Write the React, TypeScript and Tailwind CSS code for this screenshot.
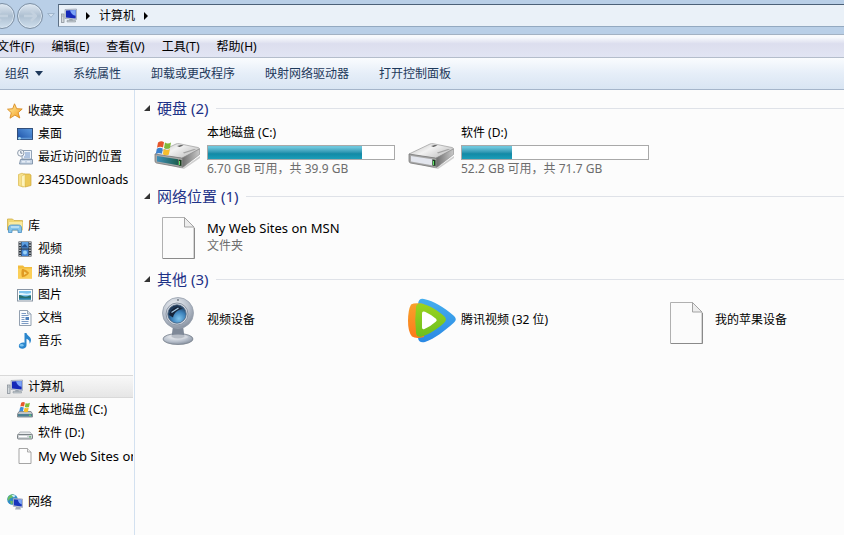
import React from 'react';
import clsx from 'clsx';

const ComputerIcon = () => (
    <svg viewBox="0 0 16 16" className="w-4 h-4 shrink-0" aria-hidden="true">
        <rect x="0.5" y="6" width="2.5" height="8.5" fill="#d5dade" stroke="#7f8890" strokeWidth="0.7" />
        <path d="M1 8h1.500" stroke="#8a939b" strokeWidth="0.7" />
        <path d="M4 1.500l11.500-.5v10.500L4 10.500z" fill="#c9d0dc" stroke="#8c96a8" strokeWidth="0.6" />
        <path d="M5 2.400l9.700-.4v8.400L5 9.500z" fill="#1428b8" />
        <path d="M9 2.200l5.700-.2v5.700c-3-.2-5-2.500-5.700-5.500z" fill="#7ba3f7" />
        <path d="M8.500 11h3l.5 1.500H8z" fill="#99a3ad" />
        <path d="M6 12.500h8.500V14H6z" fill="#c3cad1" stroke="#838c94" strokeWidth="0.5" />
    </svg>
);

const StarIcon = () => (
    <svg viewBox="0 0 16 16" className="w-4 h-4 shrink-0" aria-hidden="true">
        <defs>
            <linearGradient id="star" x1="0" y1="0" x2="1" y2="1">
                <stop offset="0" stopColor="#fff3a8" />
                <stop offset="1" stopColor="#f59a1c" />
            </linearGradient>
        </defs>
        <path d="M7.500.8l2.200 4.900 5.500.3-4.100 3.700 1.700 5.300-4.900-2.900L3 15.200l1.300-5.500L.5 6.200l5.200-.5z" fill="url(#star)" stroke="#d98a1f" strokeWidth="0.9" strokeLinejoin="round" />
    </svg>
);

const DesktopIcon = () => (
    <svg viewBox="0 0 16 16" className="w-4 h-4 shrink-0" aria-hidden="true">
        <defs>
            <linearGradient id="desk" x1="0" y1="1" x2="1" y2="0">
                <stop offset="0" stopColor="#1c4fa5" />
                <stop offset="1" stopColor="#5b9be0" />
            </linearGradient>
        </defs>
        <rect x="0.500" y="2.500" width="15" height="11" fill="url(#desk)" stroke="#27446f" strokeWidth="0.9" />
        <path d="M1 11.700h14v1.500H1z" fill="#5f97d6" />
        <circle cx="2.500" cy="12.200" r="1.300" fill="#a5dcf2" />
    </svg>
);

const RecentIcon = () => (
    <svg viewBox="0 0 16 16" className="w-4 h-4 shrink-0" aria-hidden="true">
        <path d="M5 1.500h9.500V10H5z" fill="#eef4fb" stroke="#8798ae" strokeWidth="0.9" />
        <path d="M3.500 10.500h12v4.500H2.500z" fill="#c5d3e4" stroke="#7c8ea6" strokeWidth="0.9" />
        <path d="M8 4h5M8 6h5M7 8h6" stroke="#5f87bd" strokeWidth="0.9" />
        <path d="M5 12.800h3M10 12.800h3" stroke="#f4f8fc" strokeWidth="1" />
        <circle cx="3.800" cy="4" r="3.200" fill="#f5f8fb" stroke="#8492a3" strokeWidth="0.9" />
        <path d="M3.800 2v2.200h1.600" fill="none" stroke="#52677f" strokeWidth="0.8" />
    </svg>
);

const FolderIcon = () => (
    <svg viewBox="0 0 16 16" className="w-4 h-4 shrink-0" aria-hidden="true">
        <path d="M1.500 2.500L5 1.200l3.500 1.300v11.800L6 15l-4.500-1.500z" fill="#f7e08a" stroke="#d9b74b" strokeWidth="0.7" />
        <path d="M7 2h5.500l1.500 1v10.500L8 15z" fill="#ecc957" stroke="#cfa83c" strokeWidth="0.7" />
        <path d="M4.500 4L8 2.500V15l-3.500-1.200z" fill="#fdf3bd" stroke="#dfc05b" strokeWidth="0.5" />
    </svg>
);

const LibraryIcon = () => (
    <svg viewBox="0 0 16 16" className="w-4 h-4 shrink-0" aria-hidden="true">
        <path d="M.5 1h5L7 2.500h8.500V12H.5z" fill="#f1d772" stroke="#cfae49" strokeWidth="0.8" />
        <path d="M2 4h13.500v8H2z" fill="#f9eaa0" />
        <path d="M1.500 14.500V10c0-2 1.200-3 3-3h7c1.800 0 3 1 3 3v4.500h-3.500V12H5v2.500z" fill="#85c4ea" stroke="#4b8fc4" strokeWidth="0.8" />
        <path d="M4 9h8" stroke="#d8effb" strokeWidth="1.200" />
    </svg>
);

const VideoIcon = () => (
    <svg viewBox="0 0 16 16" className="w-4 h-4 shrink-0" aria-hidden="true">
        <path d="M1.500.5h13v15h-13z" fill="#2c333b" />
        <path d="M4.500 1h7v6.500h-7z" fill="#5a9de0" />
        <path d="M4.500 8.500h7V15h-7z" fill="#4586d5" />
        <path d="M5 5.500l3-2.500 3 3.500H5z" fill="#244f8c" />
        <circle cx="8" cy="11.500" r="2" fill="#9bd3f7" />
        <path d="M3 1v14M13 1v14" stroke="#f1f4f7" strokeWidth="1.300" strokeDasharray="1.300 1.300" />
    </svg>
);

const TencentFolderIcon = () => (
    <svg viewBox="0 0 16 16" className="w-4 h-4 shrink-0" aria-hidden="true">
        <path d="M1 1.500h5L7.500 3H15v11.500H1z" fill="#f2bc3d" />
        <path d="M1 4.500h14v10H1z" fill="#fbcf58" />
        <path d="M5 5c2-.5 6 2 7 4-1 2-4.500 4.200-7 4.200-.8-2-.8-6.200 0-8.200z" fill="#e09a22" />
        <path d="M7 7.500L10 9.200l-3 1.700z" fill="#fbd871" />
    </svg>
);

const PictureIcon = () => (
    <svg viewBox="0 0 16 16" className="w-4 h-4 shrink-0" aria-hidden="true">
        <rect x="0.500" y="2.500" width="15" height="11.500" fill="#fff" stroke="#8995a3" />
        <rect x="2" y="4" width="12" height="8.500" fill="#7fc5ee" />
        <path d="M2 6.500c3-1.500 6 1.500 12-.5v2H2z" fill="#e0f4fd" />
        <path d="M2 8c3 0 4 2 7 1.500s3-1 5-1v4H2z" fill="#28706f" />
        <path d="M2 11.300h12v1.200H2z" fill="#2a86bd" />
    </svg>
);

const DocumentIcon = () => (
    <svg viewBox="0 0 16 16" className="w-4 h-4 shrink-0" aria-hidden="true">
        <path d="M2.500.5h8l3.500 3.500v11.500H2.500z" fill="#fafcfe" stroke="#8795a7" strokeWidth="0.9" />
        <path d="M10.500.5V4H14" fill="#dce4ed" stroke="#8795a7" strokeWidth="0.8" />
        <path d="M4.500 3.500H9M4.500 5.500h7M4.500 7.500h3M4.500 9.500h3M4.500 11.500h7M4.500 13.500h7" stroke="#6d90bd" strokeWidth="0.9" />
        <path d="M8.500 7h3.500v3H8.500z" fill="#4c7fbb" />
    </svg>
);

const MusicIcon = () => (
    <svg viewBox="0 0 16 16" className="w-4 h-4 shrink-0" aria-hidden="true">
        <path d="M7.500 0H9.500c.4 2.500 4.500 3.500 4.500 7 0 1.500-.7 3-1.500 3.800.6-2.800-.8-4.200-3-5v6.400c0 2-1.900 3.500-4.200 3.500-1.900 0-3.500-1-3.500-2.700 0-2.200 2.200-3.600 4.400-3.600.5 0 .9.100 1.300.3z" fill="#2b86cd" />
        <ellipse cx="4.700" cy="12.200" rx="1.900" ry="1.300" fill="#7cc5f2" />
    </svg>
);

const SystemDriveSmallIcon = () => (
    <svg viewBox="0 0 16 16" className="w-4 h-4 shrink-0" aria-hidden="true">
        <path d="M2 9.500h12l1.500 2.500v3H.5v-3z" fill="#bfc4c9" stroke="#737a80" strokeWidth="0.8" />
        <path d="M1 12h14v2.500H1z" fill="#4d8193" />
        <path d="M12 12.700h2v1h-2z" fill="#6fe06a" />
        <path d="M4.200.8C5.700-.2 6.700 0 7.900.6L7 4.600c-1.300-.6-2.300-.6-3.700 0z" fill="#e8582b" />
        <path d="M8.700.9c1.400.7 2.700.7 4.200-.1L12 4.900c-1.400.7-2.800.6-4.200 0z" fill="#7fbd37" />
        <path d="M3.100 5.400c1.400-.7 2.500-.6 3.700 0L5.900 9.500c-1.300-.7-2.400-.6-3.700 0z" fill="#3d8ed8" />
        <path d="M7.600 5.700c1.400.7 2.700.6 4.200-.1l-.9 4.100c-1.400.7-2.800.6-4.200 0z" fill="#f7bf28" />
    </svg>
);

const DriveSmallIcon = () => (
    <svg viewBox="0 0 16 16" className="w-4 h-4 shrink-0" aria-hidden="true">
        <path d="M3 7h10l2.500 3H.5z" fill="#e9ebed" stroke="#999fa4" strokeWidth="0.7" />
        <rect x="0.500" y="9.500" width="15" height="4.500" rx="1" fill="#cfd3d6" stroke="#72787d" strokeWidth="0.9" />
        <path d="M2 11.500h8" stroke="#fff" strokeWidth="1.200" />
        <path d="M12.300 11.200h1.500v1.300h-1.500z" fill="#3aa84a" />
    </svg>
);

const BlankFileSmallIcon = () => (
    <svg viewBox="0 0 16 16" className="w-4 h-4 shrink-0" aria-hidden="true">
        <path d="M2 .5h8.500L14 4v11.500H2z" fill="#fdfdfd" stroke="#9b9b9b" strokeWidth="0.9" />
        <path d="M10.500.5V4H14" fill="#eee" stroke="#9b9b9b" strokeWidth="0.8" />
    </svg>
);

const NetworkIcon = () => (
    <svg viewBox="0 0 16 16" className="w-4 h-4 shrink-0" aria-hidden="true">
        <circle cx="5.500" cy="5.500" r="5.300" fill="#2e8bc7" />
        <path d="M2 2c2-1.500 4-1.800 5-1L5.500 3.500 3 4.500 1.500 7C0 5.500.5 3.500 2 2zM3.500 6.500l2.500 1-1 3c-1.500-.5-2-2.500-1.500-4z" fill="#68bd62" />
        <path d="M4.500 1.500c1.300-.8 3-.6 4 .3L7 3.500z" fill="#c9edf8" />
        <path d="M6.300 4.300l9.200.7v8.500l-9.200-1.200z" fill="#d4dbe6" stroke="#8691a3" strokeWidth="0.600" />
        <path d="M7 5.200l7.800.6v6.700L7 11.500z" fill="#1736bd" />
        <path d="M10.800 5.500l4 .3v4.400c-2.200-.2-3.500-2-4-4.700z" fill="#7fa8f5" />
        <path d="M9 13h4l1 2.500H8z" fill="#a4adb8" />
    </svg>
);

const HardDriveIcon = ({ system }: { system?: boolean }) => (
    <svg viewBox="0 -12 48 44" className="w-12 h-11" aria-hidden="true">
        <defs>
            <linearGradient id="driveTop" x1="0" y1="0" x2="1" y2="0.600">
                <stop offset="0" stopColor="#b9b9b9" />
                <stop offset="0.500" stopColor="#f2f2f2" />
                <stop offset="1" stopColor="#c3c3c3" />
            </linearGradient>
            <linearGradient id="driveSide" x1="0" y1="0" x2="1" y2="0">
                <stop offset="0" stopColor="#6d6d6d" />
                <stop offset="1" stopColor="#c9c9c9" />
            </linearGradient>
            <linearGradient id="driveFace" x1="0" y1="0" x2="1" y2="0">
                <stop offset="0" stopColor="#3f8fb8" />
                <stop offset="1" stopColor="#1d5f4f" />
            </linearGradient>
        </defs>
        <path d="M1 20l28 9 17-12v2L30 30 1 23z" fill="#8b8b8b" opacity="0.400" />
        <path d="M1 15L22 5q1-.5 3-.3l19 3.800q1.500.5 1.500 1.500L29 19q-1 .5-3 0L2 16z" fill="url(#driveTop)" stroke="#a5a5a5" strokeWidth="0.800" />
        <path d="M45.500 10v5.500L29.500 28q-1 .5-1.500.5V19z" fill="url(#driveSide)" stroke="#8a8a8a" strokeWidth="0.600" />
        <path d="M1 15l26 4q1.500.2 1.500 1.500V27q0 1.500-2 1.300L2.500 24Q1 23.500 1 22z" fill="#a8a8a8" stroke="#7a7a7a" strokeWidth="0.800" />
        <path d="M3 17l21 3.300v6L3 22.500z" fill={system ? 'url(#driveFace)' : '#e3e6ee'} />
        <path d="M24.500 20.500l3 .4v6l-3-.5z" fill="#173d1d" />
        <path d="M25.500 22v4" stroke="#5fe266" strokeWidth="1" />
        <path d="M23 7l4-1 2.500.6-4 1.300z" fill="#5c5c5c" />
        <path d="M29 13.500l11-3.500 2 .5-12 4z" fill="#a3a3a3" />
        {system && (
            <g>
                <path d="M4 3.500c2.500-1.500 4.200-1.500 6-.3L9 8.500c-2-1.200-3.900-1.100-6 .2z" fill="#e5552b" />
                <path d="M11 3.600c2 1.300 3.900 1.100 6 0l-1 5.300c-2 1.200-4 1.200-6 0z" fill="#7fb93a" />
                <path d="M2.800 9.800c2-1.300 3.900-1.300 6-.2l-1 5.200c-2.100-1.100-3.900-1.100-6 .2z" fill="#3c83cf" />
                <path d="M9.800 10c2.100 1.200 4 1.200 6.100 0l-1 5.400c-2.100 1.200-4 1.100-6.100-.1z" fill="#f5bd2d" />
            </g>
        )}
    </svg>
);

const BlankFileIcon = () => (
    <svg viewBox="0 -3 48 48" className="w-12 h-12" aria-hidden="true">
        <path d="M8.500 3.500h22l9.500 9.500v31.500H8.500z" fill="#fbfbfb" stroke="#b0b0b0" />
        <path d="M30.500 3.500L40 13h-9.500z" fill="#ededed" stroke="#a3a3a3" />
        <path d="M9 44.500h31.500V14" fill="none" stroke="#8a8a8a" />
    </svg>
);

const WebcamIcon = () => (
    <svg viewBox="0 0 48 52" className="w-12 h-[52px]" aria-hidden="true">
        <defs>
            <radialGradient id="camBody" cx="0.400" cy="0.300" r="0.750">
                <stop offset="0" stopColor="#f3f5f8" />
                <stop offset="0.600" stopColor="#b7bfcb" />
                <stop offset="1" stopColor="#828c9b" />
            </radialGradient>
            <radialGradient id="camLens" cx="0.600" cy="0.750" r="0.700">
                <stop offset="0" stopColor="#7cc3ee" />
                <stop offset="0.550" stopColor="#3a7fb8" />
                <stop offset="1" stopColor="#1c3350" />
            </radialGradient>
        </defs>
        <ellipse cx="24" cy="45" rx="15" ry="5.500" fill="url(#camBody)" stroke="#77808c" strokeWidth="0.800" />
        <path d="M19 32h10l1.500 11q-6.500 3-13 0z" fill="#7f8998" />
        <ellipse cx="24" cy="43" rx="10" ry="2.500" fill="#dce0e5" opacity="0.600" />
        <circle cx="24" cy="19" r="15.500" fill="url(#camBody)" stroke="#97a0ac" strokeWidth="0.800" />
        <circle cx="23" cy="20" r="11" fill="#d5dbe3" stroke="#8a94a3" />
        <circle cx="23" cy="20" r="9.200" fill="url(#camLens)" stroke="#4a627e" strokeWidth="0.800" />
        <path d="M15 21c1-4.500 4-7.500 9-8.500l5 2.500c-5 .5-9 3.500-10 8.500z" fill="#16243a" />
        <path d="M17.500 18.500l7-4.500" stroke="#a9cde7" strokeWidth="1.200" />
        <circle cx="24" cy="6" r="0.900" fill="#69727d" />
    </svg>
);

const TencentVideoIcon = () => (
    <svg viewBox="0 0 48 48" className="w-12 h-12" aria-hidden="true">
        <defs>
            <linearGradient id="tvBlue" x1="0" y1="0" x2="0" y2="1">
                <stop offset="0" stopColor="#45aeee" />
                <stop offset="1" stopColor="#2a88e4" />
            </linearGradient>
            <linearGradient id="tvOrange" x1="0" y1="0" x2="0" y2="1">
                <stop offset="0" stopColor="#f8a12a" />
                <stop offset="1" stopColor="#fb7a1c" />
            </linearGradient>
            <linearGradient id="tvGreen" x1="0" y1="0" x2="0" y2="1">
                <stop offset="0" stopColor="#9bd31e" />
                <stop offset="1" stopColor="#6cbf1f" />
            </linearGradient>
        </defs>
        <path d="M10 8q.5-6 6-5c10 2 20 8.500 29.500 16.500 3 2.700 3 5 0 7.500C36.500 35 27 42.500 17 46q-6 1.500-7-4z" fill="url(#tvBlue)" />
        <path d="M3 8.500q4-2 13-.5v33q-8 2-12-.5Q0 36 0 25T3 8.500z" fill="url(#tvOrange)" />
        <path d="M8 11q.5-4 5-3.500c8 1.500 16 6.500 23 12.500 2.500 2.300 2.500 4.700 0 7-6.500 6-14.500 11-22 13.500q-5 1.500-6-3.500-1.500-13 0-26z" fill="url(#tvGreen)" />
        <path d="M14 17.500q0-3 3-1.700 6.500 3 11 7 1.500 1.500 0 2.700-5 4.500-11.500 7.500-2.500.8-2.500-1.500z" fill="#fff" />
    </svg>
);

const menus = ['文件(F)', '编辑(E)', '查看(V)', '工具(T)', '帮助(H)'];
const commands = ['系统属性', '卸载或更改程序', '映射网络驱动器', '打开控制面板'];

const treeGroups = [
    {
        label: '收藏夹',
        icon: <StarIcon />,
        children: [
            { label: '桌面', icon: <DesktopIcon /> },
            { label: '最近访问的位置', icon: <RecentIcon /> },
            { label: '2345Downloads', icon: <FolderIcon /> },
        ],
    },
    {
        label: '库',
        icon: <LibraryIcon />,
        children: [
            { label: '视频', icon: <VideoIcon /> },
            { label: '腾讯视频', icon: <TencentFolderIcon /> },
            { label: '图片', icon: <PictureIcon /> },
            { label: '文档', icon: <DocumentIcon /> },
            { label: '音乐', icon: <MusicIcon /> },
        ],
    },
    {
        label: '计算机',
        icon: <ComputerIcon />,
        selected: true,
        children: [
            { label: '本地磁盘 (C:)', icon: <SystemDriveSmallIcon /> },
            { label: '软件 (D:)', icon: <DriveSmallIcon /> },
            { label: 'My Web Sites on MSN', icon: <BlankFileSmallIcon />, large: true },
        ],
    },
    { label: '网络', icon: <NetworkIcon />, children: [] },
];

const drives = [
    { name: '本地磁盘 (C:)', free: '6.70 GB', total: '39.9 GB', used: 83, system: true },
    { name: '软件 (D:)', free: '52.2 GB', total: '71.7 GB', used: 27, system: false },
];

const Crumb = () => (
    <svg viewBox="0 0 4 8" className="w-1 h-2 shrink-0" aria-hidden="true">
        <path d="M0 0l4 4-4 4z" fill="#000" />
    </svg>
);

const NavButton = ({ label, flip }: { label: string; flip?: boolean }) => (
    <button aria-label={label} className="w-[26px] h-[26px] shrink-0 rounded-full border border-[#7d8fa3] bg-linear-to-b from-[#dfe8f1] via-[#adbfd1] to-[#cfdfed] shadow-[inset_0_0_0_1px_#dce8f3] flex items-center justify-center">
        <svg viewBox="0 0 14 12" className={clsx('w-[14px] h-3', flip && 'rotate-180')} aria-hidden="true">
            <path d="M6 1L1 6l5 5M1.500 6H13" fill="none" stroke="#c3d1df" strokeWidth="2.500" />
        </svg>
    </button>
);

type TreeItemProps = {
    label: string;
    icon: React.ReactNode;
    nested?: boolean;
    selected?: boolean;
    large?: boolean;
};

const TreeItem = ({ label, icon, nested, selected, large }: TreeItemProps) => (
    <a
        href="#"
        className={clsx(
            'flex items-center h-[23px] gap-[5px] whitespace-nowrap overflow-hidden border-y',
            nested ? 'pl-[17px]' : 'pl-[7px]',
            large && 'text-[13px]',
            selected ? 'border-[#d9d9d9] bg-linear-to-b from-[#f8f8f8] to-[#e6e6e6]' : 'border-transparent'
        )}
    >
        {icon}
        <span>{label}</span>
    </a>
);

const Section = ({ title, count, children }: { title: string; count: number; children: React.ReactNode }) => (
    <section>
        <h2 className="flex items-center gap-[7px] h-6 text-[15px] leading-6 text-[#1e3287]">
            <span className="flex items-center gap-[7px] whitespace-nowrap">
                <svg viewBox="0 0 6 6" className="w-[6px] h-[6px]" aria-hidden="true">
                    <path d="M6 0v6H0z" fill="#333" />
                </svg>
                {title} ({count})
            </span>
            <span className="flex-1 h-px bg-[#dfe2e8]" />
        </h2>
        <div className="grid grid-cols-[repeat(3,254px)] pl-[10px]">{children}</div>
    </section>
);

const Item = ({ icon, children }: { icon: React.ReactNode; children: React.ReactNode }) => (
    <div className="flex items-center gap-[5px]">
        <div className="w-12 shrink-0">{icon}</div>
        <div className="min-w-0 whitespace-nowrap">{children}</div>
    </div>
);

const App: React.FC = () => {
    return (
        <div className="min-h-screen flex flex-col overflow-hidden bg-[#fcfcfc] text-black text-[12px] leading-[18px] font-['Noto_Sans','Noto_Sans_CJK_SC',sans-serif]">
            <header>
                <nav className="flex items-center h-[34px] bg-[#b9cfe7] pb-[3px]" aria-label="地址栏">
                    <div className="flex items-center gap-[2px] -ml-[11px] mr-1 shrink-0">
                        <NavButton label="后退" />
                        <NavButton label="前进" flip />
                    </div>
                    <button aria-label="最近的页面" className="w-2 mr-[3px] shrink-0">
                        <svg viewBox="0 0 8 5" className="w-2 h-[5px]" aria-hidden="true">
                            <path d="M.7.5h6.600L4 4.300z" fill="#d3e2f1" stroke="#8fa7c0" strokeWidth="0.700" />
                        </svg>
                    </button>
                    <div className="flex-1 h-[23px] flex items-center gap-[9px] pl-[2px] bg-[#eaf1f8] border border-r-0 border-t-[#4c6178] border-l-[#5d7085] border-b-[#93a9c0]">
                        <ComputerIcon />
                        <Crumb />
                        <button>计算机</button>
                        <Crumb />
                    </div>
                </nav>
                <div className="flex items-center gap-[17px] h-6 pt-px -ml-[3px] border-y border-t-[#a3b2c3] border-b-[#b4bdcb] bg-linear-to-b from-[#f8fafd] from-10% via-[#dcdeee] via-40% to-[#e2e5f3]">
                    {menus.map(menu => (
                        <button key={menu}>{menu}</button>
                    ))}
                </div>
                <div className="flex items-center gap-[30px] h-8 pl-[5px] border-b border-[#a5b5ca] bg-linear-to-b from-[#fafcfe] via-[#e6eef8] to-[#d9e5f3] text-[#1e395b] whitespace-nowrap">
                    <button className="flex items-center gap-[6px]">
                        组织
                        <svg viewBox="0 0 8 5" className="w-2 h-[5px]" aria-hidden="true">
                            <path d="M0 0h8L4 5z" fill="#1e395b" />
                        </svg>
                    </button>
                    {commands.map(command => (
                        <button key={command}>{command}</button>
                    ))}
                </div>
            </header>

            <div className="flex flex-1">
                <aside className="w-[135px] shrink-0 pr-px pt-[9px] border-r border-[#d3e1f0] flex flex-col gap-[23px]">
                    {treeGroups.map(group => (
                        <div key={group.label}>
                            <TreeItem label={group.label} icon={group.icon} selected={group.selected} />
                            {group.children.map(child => (
                                <TreeItem key={child.label} {...child} nested />
                            ))}
                        </div>
                    ))}
                </aside>

                <main className="flex-1 min-w-0 overflow-hidden pl-[9px] pt-[6px] flex flex-col gap-[6px]">
                    <Section title="硬盘" count={2}>
                        {drives.map(drive => (
                            <Item key={drive.name} icon={<HardDriveIcon system={drive.system} />}>
                                <div className="pt-1">
                                    <div className="mb-[3px]">{drive.name}</div>
                                    <div role="meter" aria-label={drive.name} aria-valuenow={drive.used} aria-valuemin={0} aria-valuemax={100} className="w-[188px] h-[15px] border border-[#a9a9a9] bg-white">
                                        <div className="h-full bg-linear-to-b from-[#6cc6dc] from-10% via-[#128aa6] via-60% to-[#1c9db8]" style={{ width: `${drive.used}%` }} />
                                    </div>
                                    <div className="text-[#6d6d6d]">{drive.free} 可用，共 {drive.total}</div>
                                </div>
                            </Item>
                        ))}
                    </Section>
                    <Section title="网络位置" count={1}>
                        <Item icon={<BlankFileIcon />}>
                            <div className="pt-[11px] pb-[6px]">
                                <div className="text-[13px]">My Web Sites on MSN</div>
                                <div className="text-[#6d6d6d]">文件夹</div>
                            </div>
                        </Item>
                    </Section>
                    <Section title="其他" count={3}>
                        <Item icon={<WebcamIcon />}><div className="py-5">视频设备</div></Item>
                        <Item icon={<TencentVideoIcon />}>腾讯视频 (32 位)</Item>
                        <Item icon={<BlankFileIcon />}>我的苹果设备</Item>
                    </Section>
                </main>
            </div>
        </div>
    );
};

export default App;
